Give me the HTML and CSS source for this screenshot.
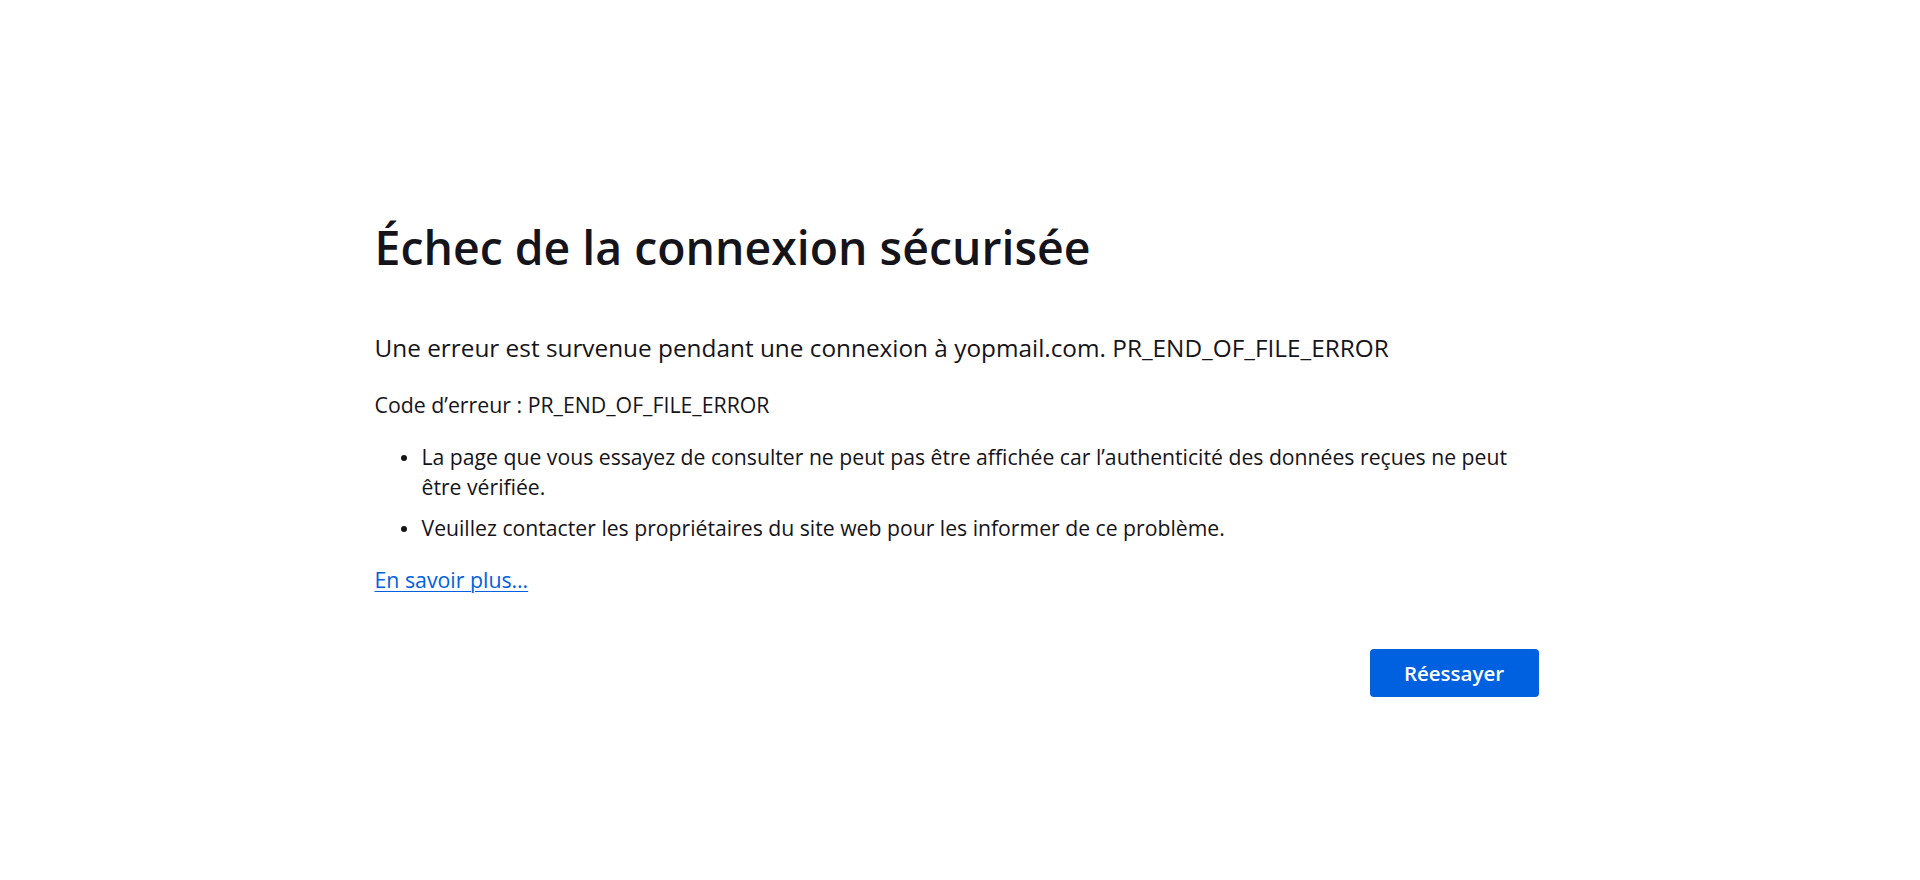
FILE: index.html
```html
<!DOCTYPE html>
<html lang="fr">
<head>
<meta charset="utf-8">
<title>Échec de la connexion sécurisée</title>
<link rel="stylesheet" href="styles.css">
</head>
<body>
<main class="page">
  <div class="container">
    <h1 class="title">Échec de la connexion sécurisée</h1>
    <p class="intro">Une erreur est survenue pendant une connexion à yopmail.com. PR_END_OF_FILE_ERROR</p>
    <p class="code">Code d’erreur : PR_END_OF_FILE_ERROR</p>
    <ul class="list">
      <li>La page que vous essayez de consulter ne peut pas être affichée car l’authenticité des données reçues ne peut être vérifiée.</li>
      <li>Veuillez contacter les propriétaires du site web pour les informer de ce problème.</li>
    </ul>
    <p class="more"><a href="#" class="link">En savoir plus…</a></p>
    <div class="actions">
      <button class="retry" type="button">Réessayer</button>
    </div>
  </div>
</main>
</body>
</html>
```

FILE: styles.css
```css
* { box-sizing: border-box; }

html, body {
  margin: 0;
  padding: 0;
  background: #ffffff;
}

body {
  font-family: "Open Sans", "Noto Sans", sans-serif;
  color: #15141a;
  font-size: 21.3px;
}

.page {
  display: flex;
  justify-content: center;
  padding: 220px 7px 0 0;
}

.container {
  width: 1164px;
  display: flex;
  flex-direction: column;
}

.title {
  margin: 0;
  font-size: 46.4px;
  line-height: 54px;
  font-weight: 600;
}

.intro {
  margin: 56.6px 0 0;
  font-size: 24.35px;
  line-height: 34px;
}

.code {
  margin: 25px 0 0;
  font-size: 21.3px;
  line-height: 30px;
}

.list {
  margin: 22px 0 0;
  padding: 0 0 0 47px;
  list-style: none;
  font-size: 21.2px;
  line-height: 30px;
}

.list li {
  position: relative;
}

.list li + li {
  margin-top: 11px;
}

.list li::before {
  content: "";
  position: absolute;
  left: -21px;
  top: 13px;
  width: 6px;
  height: 6px;
  border-radius: 50%;
  background: #15141a;
}

.more {
  margin: 22px 0 0;
  font-size: 21.3px;
  line-height: 30px;
}

.link {
  color: #0061e0;
  text-decoration: underline;
  text-decoration-thickness: 1px;
  text-underline-offset: 3px;
}

.actions {
  display: flex;
  justify-content: flex-end;
  margin-top: 54.3px;
}

.retry {
  width: 169px;
  height: 48px;
  padding: 0;
  border: none;
  border-radius: 4px;
  background: #0061e0;
  color: #ffffff;
  font-family: "Open Sans", "Noto Sans", sans-serif;
  font-size: 20.5px;
  font-weight: 600;
  cursor: pointer;
}
```
